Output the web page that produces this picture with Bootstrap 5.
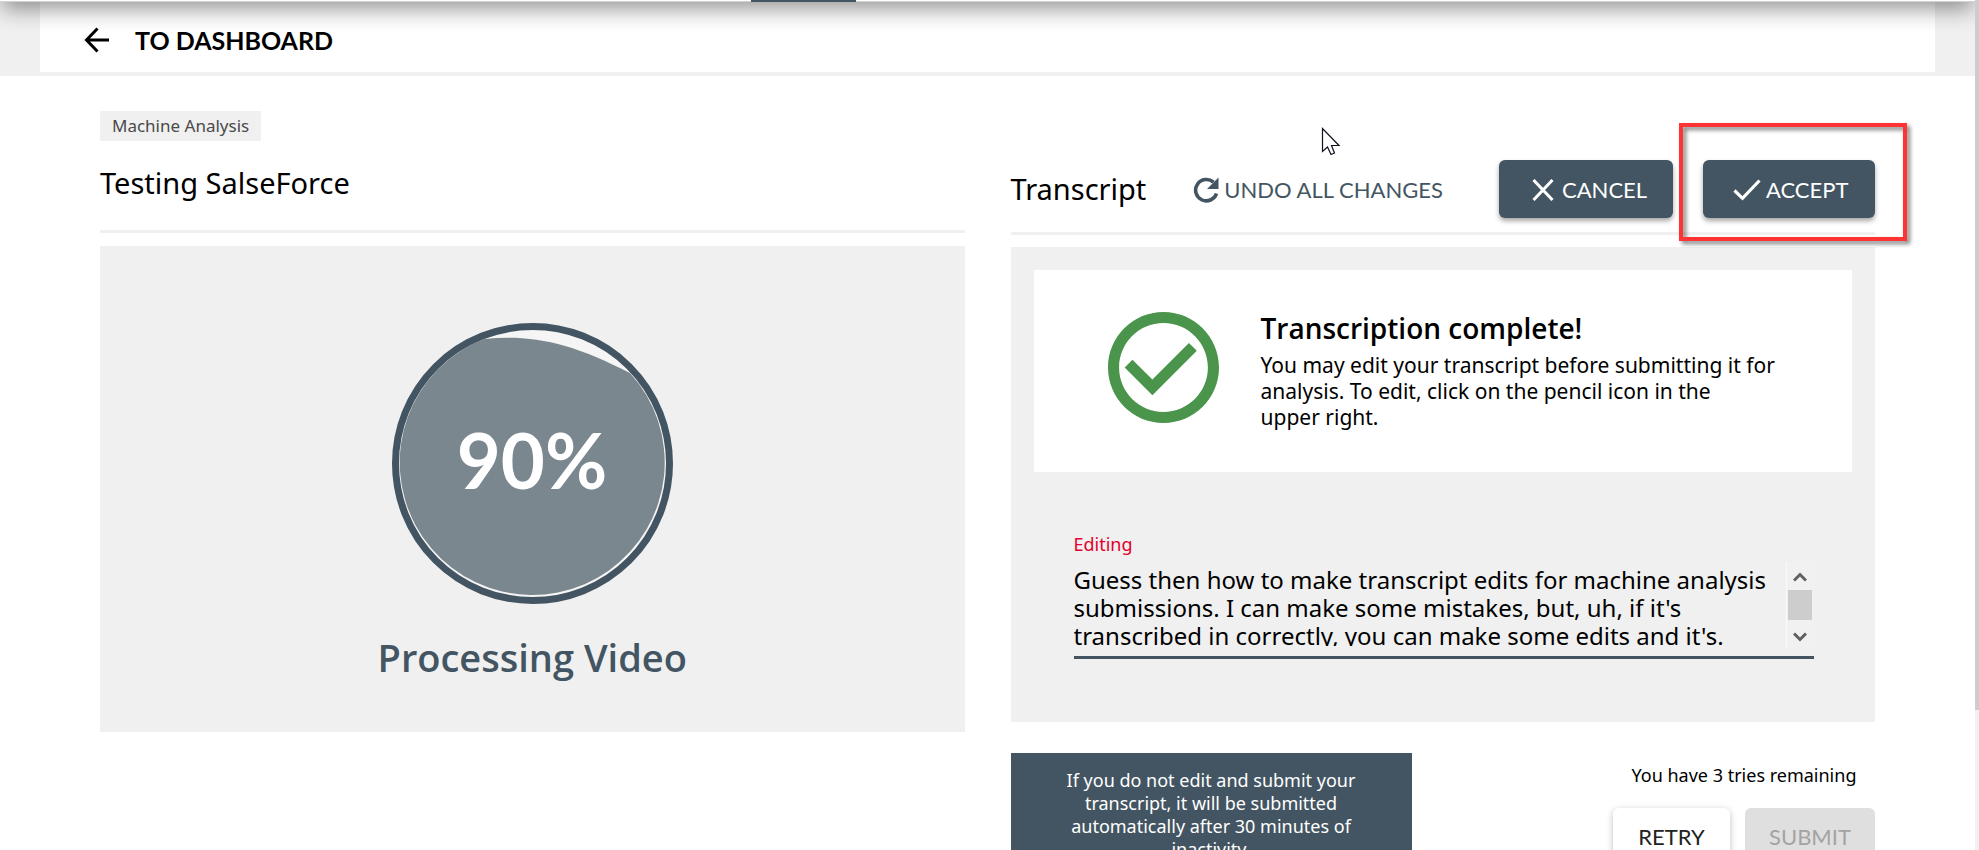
<!DOCTYPE html>
<html lang="en">
<head>
<meta charset="utf-8">
<meta name="viewport" content="width=device-width, initial-scale=1">
<title>Transcript review</title>
<link href="https://cdn.jsdelivr.net/npm/bootstrap@5.3.0/dist/css/bootstrap.min.css" rel="stylesheet">
<style>
  :root { --slate: #435562; --panel: #f0f0f0; --rule: #f0f0f0; }
  body { font-family: "Noto Sans", "Open Sans", sans-serif; font-size: 18px; line-height: 24px; color: #000; background: #fff; height: 100vh; overflow: hidden; position: relative; }

  /* Main navigation, scrolled out so that only its lower edge shows */
  .top-nav { height: 62px; margin-top: -60px; z-index: 5; border-bottom: 1px solid #d0d3d3; box-shadow: 0 9px 22px -2px rgba(0,0,0,.42); }
  .active-mark { width: 105px; height: 2px; margin-left: 38%; margin-bottom: -1px; background: var(--slate); }

  .page { padding-right: 4px; }
  .back-band { background: var(--panel); padding: 0 40px 4px; }
  .back-bar { height: 70px; padding: 5px 44px 0; background: #fff; }
  .back-bar a { gap: 25px; }
  .back-bar span { font: 700 25px/32px Lato, sans-serif; }

  main { padding: 35px 100px 0; }
  .split { --bs-gutter-x: 46px; }
  .tag { display: inline-block; background: var(--panel); color: #4a4a4a; font-size: 17px; line-height: 26px; padding: 2px 12px; vertical-align: top; }
  .heading-text { font-size: 29px; line-height: 40px; font-weight: 400; margin: 0; }
  .title-row { padding: 22px 0 27px; border-bottom: 3px solid var(--rule); margin-bottom: 13px; }
  .action-row { margin-top: 49px; padding-bottom: 14px; border-bottom: 3px solid var(--rule); margin-bottom: 12px; }

  .btn { font: 400 22px/28px Lato, sans-serif; border: 0; border-radius: 6px; }
  .btn-undo { color: var(--slate); gap: 5px; padding: 2px 0 0; margin-left: 47px; }
  .btn-main, .btn-main:hover { background: var(--slate); color: #fff; height: 58px; box-shadow: 0 3px 5px rgba(0,0,0,.35); }
  .btn-cancel { width: 174px; gap: 8px; padding: 2px 25px 0 33px; }
  .btn-accept { width: 172px; gap: 5px; padding: 2px 24px 0 30px; }
  .callout { position: relative; margin-left: 30px; }
  .callout::after { content: ""; position: absolute; inset: -37px -32px -23px -24px; border: 4px solid #f33; filter: drop-shadow(3px 3px 2px rgba(0,0,0,.5)); pointer-events: none; }

  .panel { background: var(--panel); }
  .progress-panel { padding: 77px 0 47px; }
  .progress-label { color: var(--slate); font: 600 38px/56px "Open Sans", sans-serif; margin: 25px 0 0; }
  .ring text { font: 700 76px Lato, sans-serif; fill: #fff; }

  .edit-panel { padding: 23px 23px 63px; }
  .notice { background: #fff; height: 202px; padding: 39px 20px 0 74px; gap: 42px; }
  .notice svg { margin-top: 3px; }
  .notice h2 { font: 600 28px/38px "Open Sans", sans-serif; margin: 0 0 5px; }
  .notice p { font-size: 21px; line-height: 26px; margin: 0; }
  .editor { margin: 60px 38px 0 40px; }
  .editor label { display: block; color: #e4002b; margin-bottom: 6px; }
  .edit-field { height: 97px; border-bottom: 3px solid var(--slate); }
  .edit-field textarea { height: 84px; padding: 4px 0 0; border: 0; border-radius: 0; background: transparent; color: #000; font-size: 24px; line-height: 28px; resize: none; overflow: hidden; outline: 0; }
  .mini-scroll { width: 28px; height: 87px; padding: 10px 2px 7px 1px; border-left: 1px solid #fafafa; background: #f1f1f1; }
  .mini-thumb { height: 30px; margin-bottom: 4px; background: #cdcdcd; }

  .foot { margin-top: 31px; }
  .note { background: var(--slate); color: #fff; width: 401px; padding: 16px 50px; line-height: 23px; text-align: center; }
  .tries { padding-top: 10px; }
  .tries p { margin: 0 0 21px; }
  .tries-actions { gap: 15px; }
  .btn-retry, .btn-retry:hover { width: 117px; height: 58px; background: #fff; color: #222; box-shadow: 0 2px 7px rgba(0,0,0,.25); }
  .btn-submit, .btn-submit:disabled { width: 130px; height: 58px; background: #dfdfdf; color: #a3a3a3; opacity: 1; }

  .page-scroll { position: absolute; top: 0; right: 0; width: 4px; height: 100%; background: #f1f1f1; z-index: 9; }
  .page-scroll div { height: 710px; background: #cdcdcd; }
  .pointer { position: absolute; top: 127px; left: 1321px; }
</style>
</head>
<body>
<div class="page">
  <nav class="top-nav bg-white d-flex align-items-end position-relative" aria-label="Main"><div class="active-mark"></div></nav>

  <header class="back-band">
    <div class="back-bar d-flex align-items-center">
      <a href="#" class="d-flex align-items-center text-reset text-decoration-none">
        <svg width="26" height="26" viewBox="0 0 26 26" fill="none" stroke="#000" stroke-width="3"><path d="M25 13H3M13.500 1.500L2.500 13l11 11.500"/></svg>
        <span>TO DASHBOARD</span>
      </a>
    </div>
  </header>

  <main>
    <div class="row split">
      <section class="col-6">
        <span class="tag">Machine Analysis</span>
        <div class="title-row"><h1 class="heading-text">Testing SalseForce</h1></div>
        <div class="panel progress-panel text-center">
          <svg class="ring d-block mx-auto" width="281" height="281" viewBox="0 0 281 281" role="img" aria-label="90 percent processed">
            <circle cx="140.500" cy="140.500" r="134" fill="#f5f5f5"/>
            <path d="M92 16C140 11 180 20 238 50A132.500 132.500 0 1 1 92 16Z" fill="#7b878f"/>
            <circle cx="140.500" cy="140.500" r="137" fill="none" stroke="#435562" stroke-width="7"/>
            <text x="140" y="166" text-anchor="middle">90%</text>
          </svg>
          <p class="progress-label">Processing Video</p>
        </div>
      </section>

      <section class="col-6">
        <div class="action-row d-flex align-items-center">
          <h2 class="heading-text">Transcript</h2>
          <button type="button" class="btn btn-undo d-flex align-items-center">
            <svg width="26" height="26" viewBox="0 0 26 26"><path d="M23.500 16.500A10.700 10.700 0 1 1 20.500 5.200" fill="none" stroke="#435562" stroke-width="3.600"/><path d="M25.500 0.500V12H14z" fill="#435562"/></svg>
            UNDO ALL CHANGES
          </button>
          <button type="button" class="btn btn-main btn-cancel ms-auto d-flex align-items-center">
            <svg width="22" height="22" viewBox="0 0 22 22" stroke="#fff" stroke-width="3"><path d="M1.500 1L20.500 21M20.500 1L1.500 21"/></svg>
            CANCEL
          </button>
          <div class="callout">
            <button type="button" class="btn btn-main btn-accept d-flex align-items-center">
              <svg width="28" height="22" viewBox="0 0 28 22" fill="none" stroke="#fff" stroke-width="3.200"><path d="M1.500 11.500L9.500 19.300L26.500 1.500"/></svg>
              ACCEPT
            </button>
          </div>
        </div>

        <div class="panel edit-panel">
          <div class="notice d-flex align-items-start">
            <svg class="flex-shrink-0" width="111" height="111" viewBox="2 2 20 20"><path fill="#4a954b" d="M12 2C6.480 2 2 6.480 2 12s4.480 10 10 10 10-4.480 10-10S17.520 2 12 2zm0 18c-4.410 0-8-3.590-8-8s3.590-8 8-8 8 3.590 8 8-3.590 8-8 8zm4.590-12.420L10 14.170l-3.590-3.580L5 12l5 5 8-8z"/></svg>
            <div>
              <h2>Transcription complete!</h2>
              <p>You may edit your transcript before submitting it for<br>analysis. To edit, click on the pencil icon in the<br>upper right.</p>
            </div>
          </div>
          <div class="editor">
            <label for="transcript">Editing</label>
            <div class="edit-field d-flex align-items-start">
              <textarea id="transcript" class="flex-grow-1" spellcheck="false">Guess then how to make transcript edits for machine analysis submissions. I can make some mistakes, but, uh, if it's transcribed in correctly, you can make some edits and it's.</textarea>
              <div class="mini-scroll d-flex flex-column justify-content-between align-items-stretch" aria-hidden="true">
                <svg class="mx-auto" width="14" height="10" viewBox="0 0 14 10" fill="none" stroke="#606060" stroke-width="3"><path d="M1 8.500L7 2.500l6 6"/></svg>
                <div class="mini-thumb"></div>
                <svg class="mx-auto" width="14" height="10" viewBox="0 0 14 10" fill="none" stroke="#606060" stroke-width="3"><path d="M1 1.500l6 6 6-6"/></svg>
              </div>
            </div>
          </div>
        </div>

        <div class="foot d-flex justify-content-between align-items-start">
          <div class="note">If you do not edit and submit your transcript, it will be submitted automatically after 30 minutes of inactivity.</div>
          <div class="tries text-center">
            <p>You have 3 tries remaining</p>
            <div class="tries-actions d-flex">
              <button type="button" class="btn btn-retry">RETRY</button>
              <button type="button" class="btn btn-submit" disabled>SUBMIT</button>
            </div>
          </div>
        </div>
      </section>
    </div>
  </main>
</div>

<div class="page-scroll" aria-hidden="true"><div></div></div>
<svg class="pointer" width="20" height="29" viewBox="0 0 20 29" aria-hidden="true"><path d="M1.500 1.500V24.500L6.500 20L10 27.500L13.500 26L10.500 18.500H18z" fill="#fff" stroke="#112" stroke-width="1.200"/></svg>
<script src="https://cdn.jsdelivr.net/npm/bootstrap@5.3.0/dist/js/bootstrap.bundle.min.js"></script>
</body>
</html>
